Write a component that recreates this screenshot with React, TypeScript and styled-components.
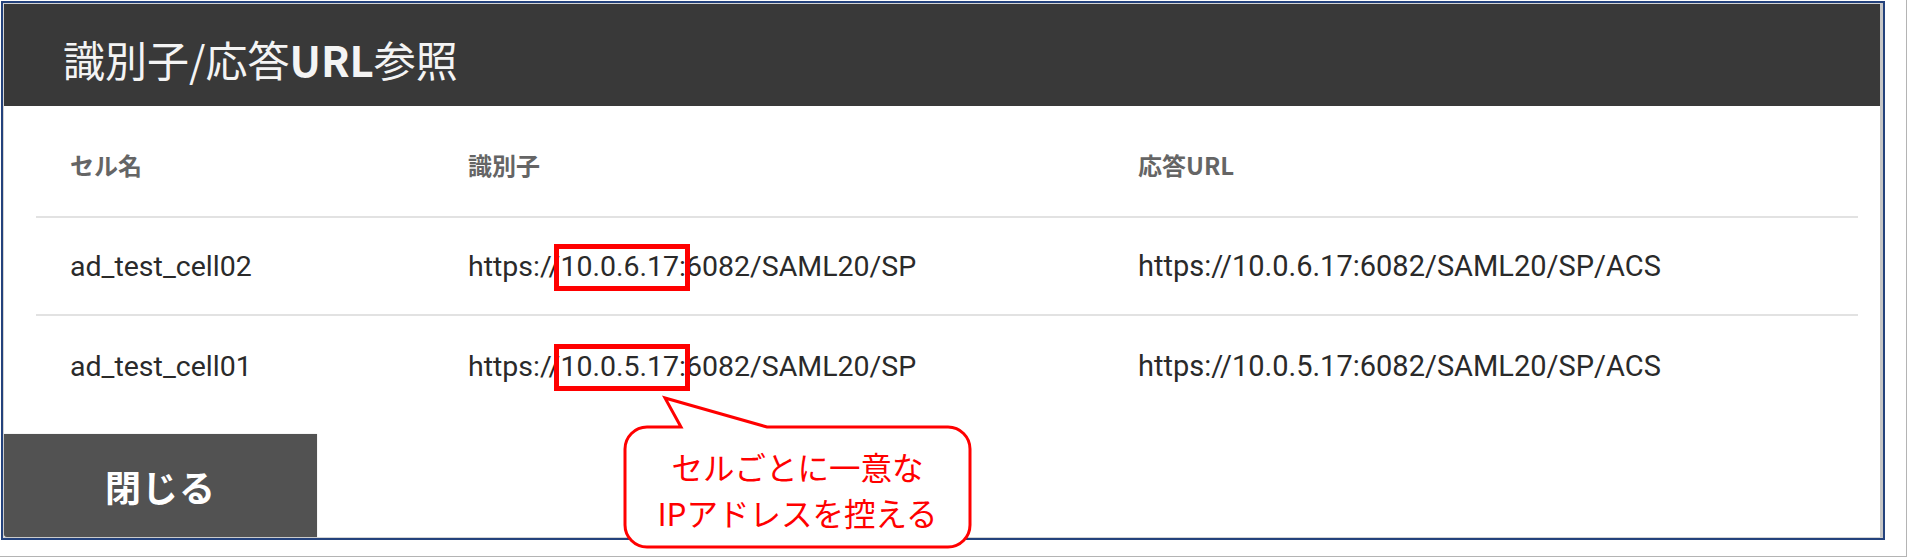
import React from 'react';
import styled, { createGlobalStyle } from 'styled-components';

const GlobalStyle = createGlobalStyle`
  html, body {
    margin: 0;
    padding: 0;
    background: #fff;
  }
  body {
    font-family: "Noto Sans CJK JP", "Noto Sans", sans-serif;
  }
`;

// outer screenshot edge
const Page = styled.div`
  width: 1907px;
  height: 557px;
  box-sizing: border-box;
  border-right: 1px solid #b4b4b4;
  border-bottom: 1px solid #b4b4b4;
  padding: 1px 0 0 1px;
  overflow: hidden;
`;

// navy window frame
const Frame = styled.div`
  position: relative;
  width: 1884px;
  box-sizing: border-box;
  border: 2px solid #24427c;
`;

const Dialog = styled.div`
  display: flex;
  flex-direction: column;
  background: #fff;
  border: 1px solid #d4d4d4;
  border-right: 3px solid #c6c6c6;
`;

const Header = styled.div`
  height: 102px;
  box-sizing: border-box;
  display: flex;
  align-items: center;
  padding: 6px 0 0 59px;
  background: #393939;
  color: #f4f4f4;
  font-size: 42px;
`;

const Latin = styled.span`
  font-weight: 700;
`;

const Table = styled.div`
  display: flex;
  flex-direction: column;
  margin: 0 22px 0 32px;
`;

const Row = styled.div<{ $h: number; $line?: boolean; $head?: boolean }>`
  display: grid;
  grid-template-columns: 398px 670px 1fr;
  align-items: center;
  height: ${({ $h }) => $h}px;
  box-sizing: border-box;
  padding-top: ${({ $head }) => ($head ? '8px' : '0')};
  border-bottom: ${({ $line }) => ($line ? '2px solid #e2e2e2' : 'none')};
`;

const HeadCell = styled.div`
  padding-left: 34px;
  font-size: 24px;
  font-weight: 700;
  color: #656565;
  line-height: 1.2;
`;

const Cell = styled.div<{ $wide?: boolean }>`
  padding-left: 34px;
  font-family: Roboto, "Noto Sans CJK JP", sans-serif;
  font-size: ${({ $wide }) => ($wide ? '29px' : '28.5px')};
  color: #2a2a2a;
  white-space: nowrap;
`;

const Mark = styled.span`
  position: relative;

  &::after {
    content: '';
    position: absolute;
    left: -6px;
    right: -11px;
    top: 50%;
    margin-top: -22.5px;
    height: 47px;
    box-sizing: border-box;
    border: 5px solid #ff0000;
  }
`;

const Footer = styled.div`
  display: flex;
  margin-top: 18px;
`;

const CloseButton = styled.button`
  width: 313px;
  height: 103px;
  border: none;
  border-radius: 0 0 0 3px;
  background: #525252;
  color: #fff;
  font-family: "Noto Sans CJK JP", sans-serif;
  font-size: 36px;
  font-weight: 700;
  letter-spacing: 1px;
  box-shadow: 0 0 1px rgba(0, 0, 0, 0.4);
  cursor: pointer;
`;

// annotation balloon laid over the table
const Callout = styled.div`
  position: absolute;
  left: 617px;
  top: 392px;
  width: 355px;
  height: 155px;
`;

const BalloonShape = styled.svg`
  position: absolute;
  inset: 0;
`;

const BalloonText = styled.div`
  position: relative;
  display: flex;
  flex-direction: column;
  align-items: center;
  padding: 48px 0 0 5px;
  width: 345px;
  color: #ff0000;
  font-size: 31.5px;
  line-height: 46px;
  white-space: nowrap;
`;

const rows = [
  { name: 'ad_test_cell02', ip: '10.0.6.17' },
  { name: 'ad_test_cell01', ip: '10.0.5.17' },
];

export default function App() {
  return (
    <>
      <GlobalStyle />
      <Page>
        <Frame>
          <Dialog>
            <Header>
              識別子/応答<Latin>URL</Latin>参照
            </Header>
            <Table>
              <Row $h={112} $line $head>
                <HeadCell>セル名</HeadCell>
                <HeadCell>識別子</HeadCell>
                <HeadCell>応答URL</HeadCell>
              </Row>
              {rows.map((r, i) => (
                <Row key={r.name} $h={i === 0 ? 98 : 100} $line={i === 0}>
                  <Cell>{r.name}</Cell>
                  <Cell>
                    https://<Mark>{r.ip}</Mark>:6082/SAML20/SP
                  </Cell>
                  <Cell $wide>https://{r.ip}:6082/SAML20/SP/ACS</Cell>
                </Row>
              ))}
            </Table>
            <Footer>
              <CloseButton>閉じる</CloseButton>
            </Footer>
          </Dialog>
          <Callout>
            <BalloonShape width="355" height="155" viewBox="0 0 355 155">
              <path
                d="M27 32 L61 32 L45 3 L147 32 L328 32 A22 22 0 0 1 350 54 L350 130 A22 22 0 0 1 328 152 L27 152 A22 22 0 0 1 5 130 L5 54 A22 22 0 0 1 27 32 Z"
                fill="#fff"
                stroke="#ff0000"
                strokeWidth="3"
                strokeLinejoin="miter"
              />
            </BalloonShape>
            <BalloonText>
              <span>セルごとに一意な</span>
              <span>IPアドレスを控える</span>
            </BalloonText>
          </Callout>
        </Frame>
      </Page>
    </>
  );
}
